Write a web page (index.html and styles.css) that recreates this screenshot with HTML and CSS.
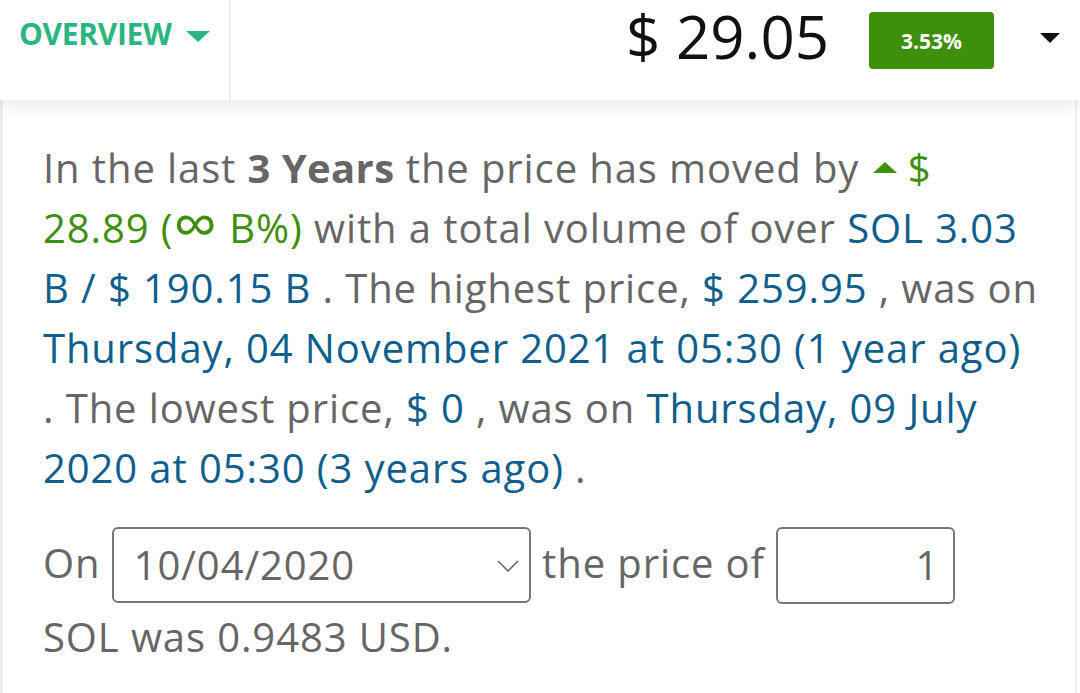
FILE: index.html
```html
<!DOCTYPE html>
<html>
<head>
<meta charset="utf-8">
<link rel="stylesheet" href="styles.css">
</head>
<body>
<header class="top">
  <div class="tab">
    <span class="tab-label">OVERVIEW</span>
    <span class="tab-caret"></span>
  </div>
  <div class="quote">
    <span class="price">$ 29.05</span>
    <span class="badge">3.53%</span>
    <span class="more"></span>
  </div>
</header>
<main class="panel">
  <p class="summary">In the last <b>3 Years</b> the price has moved by <span class="up"><span class="up-caret"></span> $ 28.89 (<span class="inf">∞</span> B%)</span> with a total volume of over <span class="link">SOL 3.03 B&nbsp;/ $ 190.15 B</span> . The highest price, <span class="link">$ 259.95</span> , was on <span class="link">Thursday, 04 November 2021 at 05:30 (1 year ago)</span> . The lowest price, <span class="link">$ 0</span> , was on <span class="link">Thursday, 09 July 2020 at 05:30 (3 years ago)</span> .</p>
  <p class="calc">On <span class="select"><span class="select-value">10/04/2020</span><svg class="chev" width="22" height="12" viewBox="0 0 22 12"><path d="M1 1 L11 11 L21 1" fill="none" stroke="#6a6a6a" stroke-width="1.6"/></svg></span> the price of <span class="amount">1</span> SOL was 0.9483 USD.</p>
</main>
</body>
</html>
```

FILE: styles.css
```css
html, body {
  margin: 0;
  padding: 0;
  background: #fff;
  font-family: "Open Sans", "Noto Sans", "DejaVu Sans", sans-serif;
}
body {
  width: 1080px;
  height: 693px;
  overflow: hidden;
  position: relative;
}
.top {
  display: flex;
  height: 100px;
  background: #fff;
  box-shadow: 0 5px 18px rgba(0,0,0,0.10);
  position: relative;
  z-index: 2;
}
.tab {
  width: 231px;
  border-right: 2px solid #ececec;
  display: flex;
  align-items: flex-start;
  padding: 14px 0 0 19px;
  box-sizing: border-box;
  gap: 14px;
}
.tab-label {
  color: #2bb583;
  font-weight: 700;
  font-size: 30px;
  letter-spacing: -0.3px;
  line-height: 40px;
}
.tab-caret {
  margin-top: 17px;
  width: 0;
  height: 0;
  border-left: 12px solid transparent;
  border-right: 12px solid transparent;
  border-top: 11px solid #2bb583;
}
.quote {
  flex: 1;
  display: flex;
  align-items: flex-start;
  justify-content: flex-end;
  padding-right: 20px;
}
.price {
  font-size: 60px;
  line-height: 70px;
  color: #111;
  margin-top: 1px;
}
.badge {
  margin: 12px 0 0 40px;
  width: 125px;
  height: 57px;
  background: #3d900a;
  border-radius: 4px;
  color: #fff;
  font-weight: 700;
  font-size: 21px;
  display: flex;
  align-items: center;
  justify-content: center;
}
.more {
  margin: 33px 0 0 46px;
  width: 0;
  height: 0;
  border-left: 10px solid transparent;
  border-right: 10px solid transparent;
  border-top: 10px solid #111;
}
.panel {
  width: 1077px;
  height: 593px;
  box-sizing: border-box;
  border-left: 3px solid #ededed;
  border-right: 2px solid #f0f0f0;
  padding: 38px 33px 0 40px;
  color: #666;
  font-size: 40px;
  letter-spacing: 0.9px;
}
.summary {
  margin: 0;
  line-height: 60px;
}
.summary b {
  font-weight: 700;
  letter-spacing: 0.4px;
}
.up {
  color: #3f8f0d;
}
.inf {
  font-size: 1.55em;
  line-height: 0;
  vertical-align: -0.06em;
}
.up-caret {
  display: inline-block;
  width: 0;
  height: 0;
  border-left: 12px solid transparent;
  border-right: 12px solid transparent;
  border-bottom: 11px solid #3f8f0d;
  vertical-align: 10px;
  margin-left: 2px;
}
.link {
  color: #0e5f8e;
}
.calc {
  margin: 32px 0 0 0;
  line-height: 66px;
}
.select {
  display: inline-flex;
  align-items: center;
  justify-content: space-between;
  box-sizing: border-box;
  width: 419px;
  height: 76px;
  border: 2px solid #777;
  border-radius: 6px;
  padding: 0 10px 0 20px;
  vertical-align: middle;
  line-height: 1;
  color: #666;
  margin: -4px 0 0 0;
}
.chev {
  margin-top: 2px;
}
.amount {
  display: inline-flex;
  align-items: center;
  justify-content: flex-end;
  box-sizing: border-box;
  width: 179px;
  height: 77px;
  border: 2px solid #777;
  border-radius: 6px;
  padding: 0 14px 0 0;
  vertical-align: middle;
  line-height: 1;
  margin-top: -4px;
}
```
